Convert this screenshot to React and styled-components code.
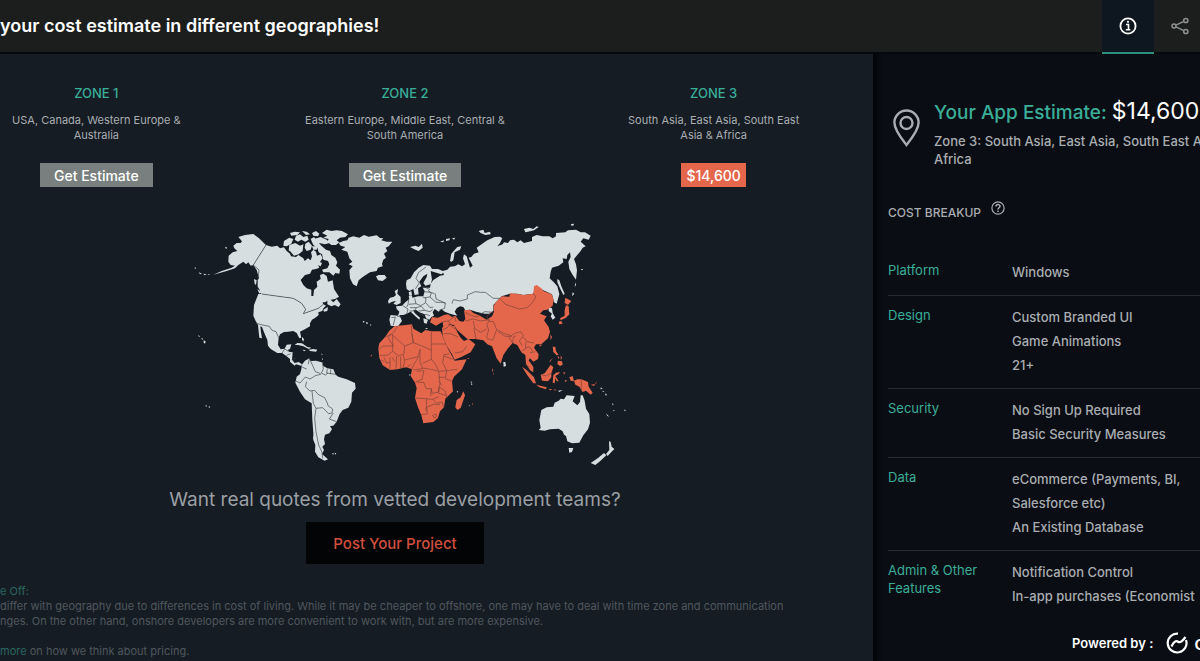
import styled, { createGlobalStyle } from 'styled-components';

const GlobalStyle = createGlobalStyle`
  *{box-sizing:border-box;}
  body{margin:0;background:#151c24;color:#a9adb1;font-family:Inter,'Open Sans',sans-serif;overflow:hidden;}
  h1,h2,h3,p,dl,dt,dd{margin:0;font-weight:400;}
  button{font-family:inherit;border:0;cursor:pointer;}
  a{text-decoration:none;}
`;

/* ── Styled Components ───────────────────────────────────────── */
const Page = styled.div`display:flex;flex-direction:column;height:100vh;overflow:hidden;`;
const Header = styled.header`
  display:flex;flex:none;height:54px;background:#1c1e1d;border-bottom:2px solid #05080c;
`;
const Title = styled.h1`flex:1;font-size:18px;font-weight:600;line-height:52px;color:#fff;white-space:nowrap;`;
const Tab = styled.button`
  display:flex;flex:none;align-items:center;justify-content:center;width:52px;height:54px;padding:0;
  color:${p => (p.$active ? '#fff' : '#8d9192')};
  background:${p => (p.$active ? '#0e161f' : 'transparent')};
  border-bottom:2px solid ${p => (p.$active ? '#2f8f7f' : 'transparent')};
`;
const Tabs = styled.nav`display:flex;flex:none;width:98px;`;
const Body = styled.div`display:flex;flex:1;min-height:0;`;
const Main = styled.main`flex:0 0 calc(100% - 327px);min-width:0;overflow:hidden;background:#151c24;`;
const Zones = styled.section`
  display:grid;grid-template-columns:repeat(3,1fr);margin:0 5px 0 -58px;padding-top:29px;
`;
const Zone = styled.article`display:flex;flex-direction:column;align-items:center;text-align:center;`;
const ZoneName = styled.h2`font-size:13px;font-weight:500;line-height:20px;color:#3aae99;`;
const ZoneText = styled.p`margin:10px 0 20px;font-size:11px;line-height:15px;white-space:pre-line;`;
const ZoneButton = styled.button`
  height:24px;padding:0 ${p => (p.$picked ? 5 : 14)}px;font-size:14px;font-weight:500;color:#fff;
  background:${p => (p.$picked ? '#e4674c' : '#787f7e')};
`;
const Offer = styled.section`
  display:flex;flex-direction:column;align-items:center;margin-right:83px;padding-top:28px;
`;
const Map = styled.svg`display:block;width:470px;height:250px;`;
const Ask = styled.h2`margin-top:23px;font-size:19px;line-height:24px;color:#9b9fa3;`;
const PostButton = styled.button`
  height:42px;margin-top:10px;padding:0 27px;font-size:15px;font-weight:500;color:#d04f3d;background:#030405;
`;
const Notes = styled.section`margin-top:20px;font-size:11px;line-height:15px;color:#50575d;white-space:nowrap;`;
const NotesTitle = styled.h3`font-size:11px;line-height:15px;color:#2b6761;`;
const NotesLink = styled.a`color:#2b6761;`;
const MoreLine = styled.p`margin-top:15px;`;

const Side = styled.aside`
  display:flex;flex-direction:column;flex:0 0 360px;padding-left:15px;
  background:linear-gradient(90deg,#030508,#0a0d13 11px);
`;
const Estimate = styled.section`display:flex;gap:14px;padding:41px 0 0 5px;`;
const Pin = styled.svg`flex:none;width:27px;height:38px;margin-top:14px;`;
const EstimateTitle = styled.h2`font-size:19px;font-weight:500;line-height:32px;color:#3aae99;white-space:nowrap;`;
const Price = styled.span`font-size:23px;font-weight:400;color:#fff;`;
const EstimateZone = styled.p`width:300px;margin-top:3px;font-size:13px;font-weight:500;line-height:18px;`;
const BreakupTitle = styled.h3`
  display:flex;gap:10px;margin-top:33px;font-size:12px;font-weight:500;line-height:24px;
`;
const Help = styled.button`width:14px;height:14px;padding:0;color:inherit;background:none;line-height:0;`;
const Breakup = styled.dl`flex:1;min-height:0;margin-top:26px;overflow:hidden;`;
const Row = styled.div`
  display:grid;grid-template-columns:124px 1fr;padding:9px 0 11px;
  &+&{border-top:1px solid #252a30;}
`;
const Label = styled.dt`padding-top:1px;font-size:13px;line-height:18px;color:#3aae99;`;
const Value = styled.dd`font-size:13px;font-weight:500;line-height:24px;white-space:pre-line;`;
const Powered = styled.footer`
  display:flex;flex:none;align-items:center;gap:13px;height:45px;padding:8px 0 0 184px;
  font-size:13px;font-weight:600;color:#fff;white-space:nowrap;
`;
const Brand = styled.span`display:flex;align-items:center;gap:6px;font-size:20px;font-weight:500;line-height:24px;`;

const ZONES = [
    { name: 'ZONE 1', text: 'USA, Canada, Western Europe &\nAustralia', action: 'Get Estimate' },
    { name: 'ZONE 2', text: 'Eastern Europe, Middle East, Central &\nSouth America', action: 'Get Estimate' },
    { name: 'ZONE 3', text: 'South Asia, East Asia, South East\nAsia & Africa', action: '$14,600', picked: true },
];

const ROWS = [
    { label: 'Platform', value: 'Windows' },
    { label: 'Design', value: 'Custom Branded UI\nGame Animations\n21+' },
    { label: 'Security', value: 'No Sign Up Required\nBasic Security Measures' },
    { label: 'Data', value: 'eCommerce (Payments, BI,\nSalesforce etc)\nAn Existing Database' },
    { label: 'Admin & Other Features', value: 'Notification Control\nIn-app purchases (Economist' },
];

/* ── Map ─────────────────────────────────────────────────────── */
const AMERICA_NORTH = [
    'M145 66 165 60 190 57 207 70 228 90 190 150 182 152 175 142 168 148 160 140 145 150 135 160 110 168 70 179 95 168 125 158 135 152 122 150 115 140 116 122 128 112 142 108 133 100 130 92 140 84 152 84 156 79Z',
    'M228 90 245 95 262 92 270 100 282 97 290 108 300 116 303 124 318 126 325 120 340 130 344 138 354 130 362 136 366 124 363 112 370 104 378 110 381 122 392 118 398 130 392 138 384 150 388 158 378 162 366 164 360 176 345 180 332 195 340 210 350 220 364 224 364 243 370 243 372 225 382 215 380 200 392 192 390 180 400 176 410 183 414 200 428 196 432 222 447 245 435 252 415 256 405 262 398 262 400 270 385 280 340 296 347 283 335 265 310 250 215 237 208 232 210 226 203 215 203 195 207 190 200 165 190 150Z',
    'M205 237 215 237 310 250 335 265 347 283 340 296 385 280 400 268 408 272 400 280 397 288 385 292 386 300 376 308 366 314 360 325 360 334 346 342 330 350 334 368 328 370 320 354 310 348 294 350 282 351 270 358 266 368 264 390 272 403 284 401 290 389 304 388 300 402 294 404 296 410 308 412 306 434 314 444 326 441 336 448 333 452 318 448 314 452 300 440 300 432 288 422 276 414 262 414 242 402 234 392 232 375 222 352 216 336 211 334 213 352 216 370 208 368 206 350 204 330 197 318 190 302 192 270Z',
    'M412 256 422 254 430 262 440 252 452 268 446 276 434 270 424 274 412 268Z M400 284 414 276 412 288 402 290Z',
    'M362 72 372 66 382 78 394 92 408 104 420 108 424 120 436 128 442 142 438 152 450 164 448 176 436 174 430 182 418 172 400 172 396 164 412 160 418 148 414 138 400 134 396 118 386 112 382 98 370 90Z',
    'M298 90 316 84 330 92 340 88 338 108 326 118 312 122 302 110 296 106Z M282 78 298 68 310 72 304 86 290 94 280 92Z M318 62 330 58 340 66 352 62 356 74 346 80 334 74 324 80 314 74Z M346 86 356 80 366 92 362 104 350 108 344 98Z M300 54 314 50 330 52 322 60 304 62Z M336 48 350 50 360 58 348 60Z M366 54 378 48 388 56 384 64 370 62Z M372 72 392 66 410 74 420 84 404 88 388 84 380 88Z',
    'M396 54 410 44 424 48 440 46 456 48 474 58 466 66 450 68 440 76 448 82 438 90 424 90 412 80 416 72 400 68 412 62Z M366 94 382 94 380 104 370 104Z M384 138 396 144 392 154 382 150Z',
    'M192 192 200 196 198 210 194 206Z M202 222 214 230 208 236Z M314 390 322 384 336 385 352 396 364 398 356 402 340 394 324 390Z M356 404 370 402 382 404 378 410 360 408Z M338 404 348 406 342 409Z M336 366 342 372 340 380 336 374Z M105 95 112 98 108 102Z M14 157 19 159 15 162Z M26 172 36 176 30 178Z M40 176 50 178 44 181Z M56 176 60 179 55 180Z M24 360 30 364 27 366Z M34 368 40 372 36 374Z M41 376 47 379 45 386 41 383Z',
    'M446 84 460 78 472 76 476 68 490 64 508 68 522 60 536 65 560 61 570 69 580 70 574 76 590 80 607 80 596 94 587 98 592 108 582 116 588 128 580 134 576 146 578 154 564 158 560 168 540 172 518 186 506 196 500 214 489 208 480 190 478 166 488 154 476 148 487 140 478 130 472 110 454 104 466 96 452 92Z',
    'M558 184 566 180 584 180 590 188 578 198 564 196Z M518 317 525 320 520 323Z M528 320 535 324 530 328Z M540 328 545 330 541 332Z',
];
const AMERICA_SOUTH = [
    'M335 75 345 62 358 55 362 63 378 62 395 67 400 78 412 85 430 88 437 104 445 110 470 118 495 129 497 146 486 158 484 185 475 203 458 210 449 222 440 245 430 257 420 258 426 268 418 280 405 284 402 298 405 312 397 320 402 330 396 342 414 358 404 362 385 352 375 335 376 315 370 300 370 280 367 240 365 190 345 178 330 155 316 128 320 110 330 102 334 88Z',
    'M426 339 433 341 429 344Z M434 338 439 340 436 344Z M369 290 373 292 371 300Z M396 66 399 70 397 74Z M396 54 399 58 396 60Z M395 40 398 44 395 46Z M46 195 52 198 48 200Z M56 198 61 201 57 204Z',
];
const AMERICA_BORDERS = [
    'M198 325 218 330 238 334 246 346 258 350 266 368 M276 414 284 402 294 408 M290 421 302 416 M305 434 316 430',
    'M355 448 358 430 368 452 376 470 390 475 M333 455 350 462 M398 444 400 462 392 478 376 482 360 492 346 486 330 504 318 498 M412 461 410 474 437 478 M422 463 422 478 M350 500 346 515 360 528 374 526 384 538 404 548 412 564 414 572 428 582 426 594 416 596 398 578 378 580 370 565 366 528 M378 580 374 610 378 650 386 690 396 712 398 730 M430 594 418 612 440 620 M396 475 406 480 414 474',
];
const ASIA_WHITE = [
    'M190 195 210 182 222 180 218 168 232 164 240 155 254 154 265 148 276 154 285 148 279 130 282 118 290 124 300 158 308 152 296 128 304 126 312 116 326 112 320 98 340 84 352 76 374 66 390 65 397 70 390 84 382 94 398 88 402 82 414 84 420 76 432 74 442 82 452 76 462 84 486 78 486 66 500 60 518 64 538 64 548 70 558 64 558 54 586 52 594 46 618 44 632 52 645 52 662 62 656 74 640 70 632 80 647 94 638 98 632 108 620 122 612 132 618 148 621 166 618 194 608 180 598 162 595 140 602 126 600 112 592 120 590 132 578 130 580 142 566 152 546 158 542 170 539 190 550 200 562 214 568 238 560 266 552 262 546 238 520 226 498 212 490 236 460 240 440 236 420 236 395 244 370 270 370 288 358 296 345 296 334 294 318 290 300 284 286 286 280 276 270 274 260 280 254 290 262 302 240 296 224 290 214 282 206 290 194 282 188 292 192 302 184 306 178 314 168 310 164 298 148 292 140 286 130 284 134 294 150 308 148 314 136 304 122 290 110 296 100 300 88 300 96 318 84 334 62 332 58 314 62 300 84 302 88 290 80 282 78 274 96 272 106 262 118 252 116 244 124 240 128 248 144 244 160 244 164 228 158 218 180 218 182 206Z',
    'M108 206 110 196 122 190 132 172 146 158 160 150 180 152 186 162 204 162 224 170 214 178 194 172 182 168 186 194 182 208 166 212 160 204 170 186 172 176 160 184 148 200 154 214 144 220 146 238 134 240 130 222 118 228 110 222Z',
    'M66 260 68 248 78 240 74 228 84 222 82 236 92 246 92 264 80 270 70 266 78 258Z M54 258 60 248 70 246 66 260 56 266Z M116 232 124 228 126 240 118 242Z M240 138 244 116 262 96 274 94 270 104 254 112 250 136 244 140Z M120 96 136 92 146 96 156 86 158 98 146 108 136 104Z M210 80 222 76 220 82Z M228 72 240 70 238 76 228 78Z M246 70 256 68 252 74Z M326 48 340 44 344 54 360 50 362 58 346 60 332 54Z M462 42 478 38 490 42 500 34 506 36 492 46 474 50 466 52Z M604 27 612 26 610 32 602 31Z M562 192 568 196 574 214 584 236 580 240 570 220 562 202Z M632 162 640 162 636 166Z M616 202 618 210 614 216Z M608 232 613 236 606 244Z',
    'M160 310 174 314 170 326 162 324Z M536 276 546 280 548 294 556 308 548 314 542 304 546 296 536 288Z M165 340 174 339 170 343Z',
];
const ASIA_ORANGE = [
    'M180 322 186 306 204 308 222 300 234 298 246 306 256 302 268 318 280 320 286 312 282 286 300 284 310 294 330 302 350 314 366 304 372 290 370 274 378 262 395 244 418 245 420 235 440 236 460 240 490 236 492 214 500 210 514 220 520 228 545 238 551 254 548 272 532 284 520 286 510 296 530 304 522 316 536 336 540 350 534 370 514 388 498 388 492 398 506 418 504 432 490 440 480 430 476 436 490 456 490 472 480 466 468 446 466 420 454 412 442 390 428 384 414 400 400 420 392 446 380 430 366 394 352 388 340 376 316 372 292 372 276 358 262 346 252 330 236 328 220 340 218 320 198 332Z',
    'M216 338 234 328 254 334 262 352 272 368 282 378 296 372 316 388 302 412 274 426 254 434 246 418 230 392 218 364Z',
    'M586 248 604 258 594 270 584 264Z M588 270 596 274 598 298 588 308 572 316 570 310 584 302 584 286Z M566 320 574 318 578 326 568 328Z M541 358 546 366 542 376Z',
];
const AFRICA = 'M25 25 28 10 46 -10 58 -28 74 -42 100 -44 126 -47 130 -34 154 -20 166 -30 186 -26 212 -26 220 -6 234 26 254 62 290 58 276 88 252 110 246 124 249 154 226 176 222 202 210 214 204 234 190 246 160 250 154 226 144 202 135 174 140 144 135 128 122 108 126 88 108 82 82 88 60 90 38 76 28 54Z';
const SOUTH_ISLANDS = [
    'M280 154 285 166 272 204 262 210 256 202 260 180 272 172Z M456 80 470 90 492 112 498 130 490 130 472 106Z M498 134 514 138 530 142 528 148 508 142Z M512 104 524 100 542 74 550 82 544 100 544 112 534 124 516 122Z M550 106 558 98 570 96 566 102 556 108 566 124 560 124 556 114 554 130 548 128Z M548 20 556 20 558 34 566 44 560 46 550 36Z M564 62 576 64 578 74 570 78 562 72Z M562 48 568 52 566 58Z M572 46 576 54 572 60Z M549 54 540 66 538 64Z M580 96 586 98 582 104Z M598 112 608 108 612 124 602 122Z M612 122 622 118 634 118 654 126 656 140 668 158 662 164 648 152 638 156 628 140 616 134Z M584 120 592 122 586 126Z M536 146 548 148 540 151Z M552 148 560 150 554 152Z M662 134 678 132 680 124 672 138Z M366 84 370 92 367 95Z M369 99 372 102 369 104Z M306 190 310 192 307 195Z M3 44 7 46 2 50Z M292 54 298 54 294 58Z M508 14 516 14 510 20Z',
];
const OCEANIA = 'M506 270 512 264 508 240 514 210 530 202 550 200 554 188 566 182 572 176 582 178 590 166 614 168 608 184 622 196 630 186 632 166 638 166 644 182 648 206 658 222 660 248 654 268 640 286 628 308 606 310 592 304 588 288 582 284 578 274 566 266 540 268 524 272Z M596 324 610 324 606 336 598 338Z M717 303 722 306 725 320 733 327 722 338 713 348 708 342 718 330Z M702 339 709 346 690 364 676 375 662 369 684 354Z M400 66 406 66 408 78 401 80Z M564 152 578 150 568 156Z M692 142 698 146 692 148Z M698 152 704 154 698 156Z M706 160 712 166 706 166Z M726 188 731 194 728 196Z M708 220 718 230 712 228Z M730 210 735 212 730 214Z M763 208 768 212 764 214Z M302 124 306 126 303 130Z M303 130 308 132 304 136Z M260 152 265 155 262 158Z M296 196 301 197 298 199Z M118 102 122 104 119 108Z';

const EUROPE_BORDERS = 'M246 266 250 254 270 258 292 252 292 240 316 230 332 232 346 232 370 250 390 250 M330 298 344 290 370 292 M136 222 148 204 138 190 146 172 168 156 M82 304 96 306 M64 308 76 306 70 330 M98 272 114 282 110 298 M116 254 114 268 110 276 M134 250 138 266 116 268 M138 266 152 272 166 264 168 250 158 246 M164 248 180 246 198 262 212 262 226 264 224 280 208 286 M180 246 184 234 174 226 M160 230 182 232 194 236 M168 264 180 278 190 276 M120 278 138 278 136 288 118 288 M138 278 154 274 164 286 146 288 M164 286 180 290 188 284 M150 296 160 302 168 298 180 302 M196 236 198 252 226 264 M160 214 180 224';
const ASIA_BORDERS = 'M390 250 406 268 430 276 448 282 472 278 486 264 498 246 490 236 M370 288 350 304 358 318 350 328 356 344 350 368 M286 318 310 312 330 318 358 314 M310 318 314 340 332 352 350 342 M312 340 318 372 M286 292 304 302 322 306 330 300 M356 318 370 320 380 344 404 356 424 362 436 354 452 350 460 362 448 378 456 392 M350 370 368 376 380 344 M384 350 406 364 426 364 M416 366 428 384 430 366 438 362 M460 366 472 380 492 384 M468 380 466 398 480 396 488 410 M468 400 456 408 M480 414 496 410 M218 320 236 318 252 306 M236 318 244 334 268 350 M254 304 258 320 M218 344 232 338 242 326 M222 356 242 356 264 366 M254 414 278 410 290 394 M466 448 478 456';
const AFRICA_BORDERS = 'M28 28 38 18 70 18 54 -8 74 -26 82 -42 M48 -10 64 -18 M68 -16 68 34 52 46 30 46 M66 -16 104 18 130 8 126 -16 124 -44 M126 -20 130 8 146 14 184 30 184 12 184 -28 M184 12 228 12 M104 18 102 42 86 48 68 34 M80 48 78 86 M60 52 60 88 M42 52 50 70 60 66 M92 50 92 84 M100 46 104 66 98 84 M104 60 144 50 150 28 M146 50 130 76 124 90 M150 28 150 66 158 86 130 90 M158 70 184 58 184 30 M158 84 184 88 206 94 230 92 218 68 222 44 238 42 M184 58 196 72 206 92 M222 48 248 58 M230 92 226 116 248 124 M230 92 262 88 M140 94 162 92 156 118 136 126 M140 126 162 128 168 146 184 146 186 160 206 156 210 130 206 94 M206 124 216 136 M136 174 166 176 188 178 206 170 M170 176 168 214 M154 224 172 222 170 202 192 192 210 194 M188 178 200 190 216 186 222 202 M184 146 182 168 M210 142 226 154 230 174 M206 140 206 160 228 166 M188 226 198 222 200 230 192 234 188 226 M44 66 34 60 M66 52 74 64 M112 82 122 72 M206 112 224 112';

const Shapes = ({ paths }) => paths.map(d => <path key={d.slice(0, 16)} d={d} />);

function WorldMap() {
    return (
        <Map viewBox="-90 0 1410 750" role="img" aria-label="World map by zone" strokeLinejoin="round">
            <g fill="#d7dee0">
                <Shapes paths={AMERICA_NORTH} />
                <g transform="translate(0 375)"><Shapes paths={AMERICA_SOUTH} /></g>
                <g transform="translate(540 0)"><Shapes paths={ASIA_WHITE} /></g>
                <path d={OCEANIA} transform="translate(540 375)" />
            </g>
            <g fill="#e4674c">
                <g transform="translate(540 0)"><Shapes paths={ASIA_ORANGE} /></g>
                <g transform="translate(540 375)">
                    <path d={AFRICA} />
                    <Shapes paths={SOUTH_ISLANDS} />
                </g>
            </g>
            <g fill="none" stroke="#3a4248" strokeWidth="2">
                <path d="M228 90 190 150 207 165 204 190M215 237 310 250 335 265 347 283 340 296 385 280 400 268" />
                <Shapes paths={AMERICA_BORDERS} />
                <path d={EUROPE_BORDERS} transform="translate(540 0)" />
            </g>
            <g fill="none" stroke="#7c4238" strokeWidth="2">
                <path d={ASIA_BORDERS} transform="translate(540 0)" />
                <path d={AFRICA_BORDERS} transform="translate(540 375)" />
                <path d="M634 118V154M514 104 528 108 542 100" transform="translate(540 375)" />
            </g>
        </Map>
    );
}

/* ── Icons ───────────────────────────────────────────────────── */
const InfoIcon = () => (
    <svg width="18" height="18" viewBox="0 0 18 18" fill="none" stroke="currentColor" aria-hidden="true">
        <circle cx="9" cy="9" r="7.6" strokeWidth="1.8" />
        <path d="M7 7.5H9.5V12.5M6.8 12.8H11.4" strokeWidth="1.6" />
        <circle cx="9" cy="4.8" r="1.1" fill="currentColor" stroke="none" />
    </svg>
);
const ShareIcon = () => (
    <svg width="18" height="18" viewBox="0 0 18 18" fill="none" stroke="currentColor" strokeWidth="1.5" aria-hidden="true">
        <circle cx="3" cy="9" r="2" /><circle cx="14.8" cy="3.5" r="2.1" /><circle cx="14.8" cy="14.5" r="2.1" />
        <path d="M5 8.1 12.8 4.4M5 9.9 12.8 13.6" />
    </svg>
);
const HelpIcon = () => (
    <svg width="14" height="14" viewBox="0 0 14 14" fill="none" stroke="currentColor" strokeWidth="1.2" aria-hidden="true">
        <circle cx="7" cy="7" r="6.1" />
        <path d="M5 5.4C5 3 9 3 9 5.3C9 6.8 7 6.7 7 8.5" strokeWidth="1.5" />
        <path d="M7 9.5V11" strokeWidth="1.5" />
    </svg>
);
const BrandIcon = () => (
    <svg width="22" height="22" viewBox="0 0 22 22" fill="none" stroke="currentColor" strokeWidth="2.2" aria-hidden="true">
        <path d="M12 1.7A9.4 9.4 0 1 0 20 8" />
        <path d="M5.5 14.5C8 8.5 10.5 8.5 12.5 10C15 11 17 8.5 19.5 5" />
    </svg>
);

/* ── Page ────────────────────────────────────────────────────── */
export default function App() {
    return (
        <Page>
            <GlobalStyle />
            <Header>
                <Title>your cost estimate in different geographies!</Title>
                <Tabs aria-label="Panels">
                    <Tab $active aria-label="Info"><InfoIcon /></Tab>
                    <Tab aria-label="Share"><ShareIcon /></Tab>
                </Tabs>
            </Header>
            <Body>
                <Main>
                    <Zones>
                        {ZONES.map(z => (
                            <Zone key={z.name}>
                                <ZoneName>{z.name}</ZoneName>
                                <ZoneText>{z.text}</ZoneText>
                                <ZoneButton $picked={z.picked}>{z.action}</ZoneButton>
                            </Zone>
                        ))}
                    </Zones>
                    <Offer>
                        <WorldMap />
                        <Ask>Want real quotes from vetted development teams?</Ask>
                        <PostButton>Post Your Project</PostButton>
                    </Offer>
                    <Notes>
                        <NotesTitle>e Off:</NotesTitle>
                        <p>differ with geography due to differences in cost of living. While it may be cheaper to offshore, one may have to deal with time zone and communication</p>
                        <p>nges. On the other hand, onshore developers are more convenient to work with, but are more expensive.</p>
                        <MoreLine><NotesLink href="#pricing">more</NotesLink> on how we think about pricing.</MoreLine>
                    </Notes>
                </Main>
                <Side>
                    <Estimate>
                        <Pin viewBox="0 0 27 38" fill="none" stroke="#a9adb1" strokeWidth="2.4" aria-hidden="true">
                            <path d="M13.5 36C10 31.5 1.4 21.5 1.4 13.6a12.1 12.1 0 0 1 24.2 0C25.6 21.5 17 31.5 13.5 36Z" />
                            <circle cx="13.5" cy="14" r="6" />
                        </Pin>
                        <div>
                            <EstimateTitle>Your App Estimate: <Price>$14,600</Price></EstimateTitle>
                            <EstimateZone>Zone 3: South Asia, East Asia, South East Asia & Africa</EstimateZone>
                        </div>
                    </Estimate>
                    <BreakupTitle>COST BREAKUP <Help aria-label="About the cost breakup"><HelpIcon /></Help></BreakupTitle>
                    <Breakup>
                        {ROWS.map(r => (
                            <Row key={r.label}>
                                <Label>{r.label}</Label>
                                <Value>{r.value}</Value>
                            </Row>
                        ))}
                    </Breakup>
                    <Powered>
                        Powered by :
                        <Brand><BrandIcon />o</Brand>
                    </Powered>
                </Side>
            </Body>
        </Page>
    );
}
